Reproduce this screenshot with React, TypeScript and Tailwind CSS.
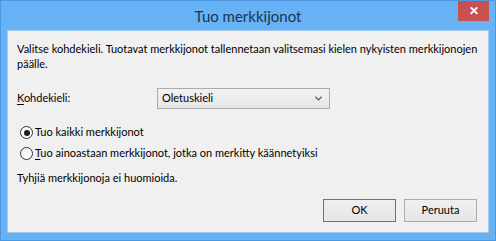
import { ChevronDown } from 'lucide-react';

function Radio({ checked, children }: { checked?: boolean; children: React.ReactNode }) {
    return (
        <div className="flex h-[21px] items-center">
            <span className="ml-[3px] mr-[2px] flex h-[13px] w-[13px] items-center justify-center rounded-full border border-[#333] bg-gradient-to-b from-[#f4f4f4] to-white">
                {checked && <span className="h-[6px] w-[6px] rounded-full bg-[#1f1f1f]" />}
            </span>
            <span>{children}</span>
        </div>
    );
}

export default function App() {
    return (
        <div
            className="relative flex h-[241px] w-[496px] flex-col border border-[#4c98e0] bg-[#66b2f4] text-[11px] text-[#000]"
            style={{ fontFamily: 'Lato, "Open Sans", sans-serif' }}
        >
            {/* Title bar */}
            <div className="flex h-[29px] items-center justify-center pt-[1px] text-[15px] text-[#1b3350]">Tuo merkkijonot</div>
            <div className="absolute right-[6px] top-0 flex h-[20px] w-[31px] items-center justify-center bg-[#c75050] text-[12px] font-bold leading-none text-white">
                ✕
            </div>

            {/* Content */}
            <div className="mx-[6px] flex flex-1 flex-col border border-[#a3c9ee] bg-[#f0f0f0] pb-[10px] pl-[9px] pr-[11px] pt-[10px]">
                <p className="whitespace-nowrap leading-[15px]">
                    Valitse kohdekieli. Tuotavat merkkijonot tallennetaan valitsemasi kielen nykyisten merkkijonojen
                    <br />
                    päälle.
                </p>

                <div className="mt-[17px] flex h-[21px] items-center">
                    <span className="w-[140px]">
                        <span className="underline underline-offset-2">K</span>ohdekieli:
                    </span>
                    <div className="flex h-[21px] w-[173px] items-center justify-between border border-[#acacac] bg-gradient-to-b from-[#f2f2f2] to-[#e6e6e6] pl-[4px] pr-[5px]">
                        <span>Oletuskieli</span>
                        <ChevronDown size={11} strokeWidth={3} className="text-[#555]" />
                    </div>
                </div>

                <div className="mt-[13px]">
                    <Radio checked>Tuo kaikki merkkijonot</Radio>
                    <Radio>
                        <span className="underline underline-offset-2">T</span>uo ainoastaan merkkijonot, jotka on merkitty käännetyiksi
                    </Radio>
                </div>

                <p className="mt-[6px] leading-[15px]">Tyhjiä merkkijonoja ei huomioida.</p>

                <div className="mt-auto flex justify-end gap-[8px]">
                    <button className="h-[23px] w-[73px] border border-[#3c7fb1] bg-gradient-to-b from-[#f0f0f0] to-[#e5e5e5]">OK</button>
                    <button className="h-[23px] w-[73px] border border-[#acacac] bg-gradient-to-b from-[#f0f0f0] to-[#e5e5e5]">Peruuta</button>
                </div>
            </div>
            <div className="h-[7px]" />
        </div>
    );
}
